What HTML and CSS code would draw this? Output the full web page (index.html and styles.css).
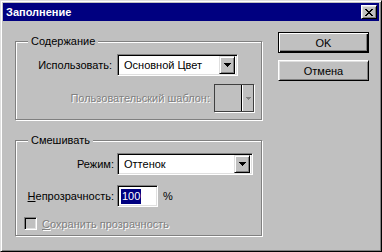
FILE: index.html
```html
<!doctype html>
<html>
	<head>
		<meta charset="utf-8" />
		<title>Заполнение</title>
		<link rel="stylesheet" href="styles.css">
	</head>
	<body>
		<div class="window">
			<div class="titlebar">
				<span class="title">Заполнение</span>
				<button class="close">
					<svg width="8" height="7" viewBox="0 0 8 7" shape-rendering="crispEdges">
						<path d="M0 0h2v1H0zM6 0h2v1H6zM1 1h2v1H1zM5 1h2v1H5zM2 2h4v1H2zM3 3h2v1H3zM2 4h4v1H2zM1 5h2v1H1zM5 5h2v1H5zM0 6h2v1H0zM6 6h2v1H6z" fill="#000"/>
					</svg>
				</button>
			</div>
			<div class="main">
				<div class="groups">
					<div class="group group-content">
						<span class="legend">Содержание</span>
						<div class="row use-row">
							<label class="lbl">Использовать:</label>
							<div class="combo combo-use">
								<span class="combo-text">Основной Цвет</span>
								<span class="drop">
									<svg width="7" height="4" viewBox="0 0 7 4" shape-rendering="crispEdges"><path d="M0 0h7v1H0zM1 1h5v1H1zM2 2h3v1H2zM3 3h1v1H3z" fill="#000"/></svg>
								</span>
							</div>
						</div>
						<div class="row pattern-row">
							<span class="disabled">Пользовательский шаблон:</span>
							<div class="pattern">
								<span class="swatch"></span>
								<span class="pattern-drop">
									<svg width="5" height="4" viewBox="0 0 5 4" shape-rendering="crispEdges"><path d="M0 1h5v1H0zM1 2h3v1H1zM2 3h1v1H2z" fill="#808080"/></svg>
								</span>
							</div>
						</div>
					</div>
					<div class="group group-blend">
						<span class="legend">Смешивать</span>
						<div class="blend-grid">
							<label class="lbl">Режим:</label>
							<div class="combo combo-mode">
								<span class="combo-text">Оттенок</span>
								<span class="drop">
									<svg width="7" height="4" viewBox="0 0 7 4" shape-rendering="crispEdges"><path d="M0 0h7v1H0zM1 1h5v1H1zM2 2h3v1H2zM3 3h1v1H3z" fill="#000"/></svg>
								</span>
							</div>
							<label class="lbl"><u>Н</u>епрозрачность:</label>
							<div class="opacity">
								<div class="field"><span class="sel">100</span></div>
								<span class="pct">%</span>
							</div>
						</div>
						<div class="check-row">
							<span class="check"></span>
							<span class="disabled"><u>С</u>охранить прозрачность</span>
						</div>
					</div>
				</div>
				<div class="buttons">
					<button class="btn btn-default">OK</button>
					<button class="btn">Отмена</button>
				</div>
			</div>
		</div>
	</body>
</html>
```

FILE: styles.css
```css
*{
	margin:0;
	padding:0;
	box-sizing:border-box;
}
body{
	background:#c0c0c0;
	font-family:"Liberation Sans", Arial, sans-serif;
	font-size:11px;
	color:#000;
}
.window{
	width:382px;
	height:252px;
	background:#c0c0c0;
	border:1px solid;
	border-color:#dfdfdf #000 #000 #dfdfdf;
	box-shadow:inset 1px 1px 0 #fff, inset -1px -1px 0 #808080;
	padding:2px;
}
.titlebar{
	height:18px;
	background:#000080;
	display:flex;
	align-items:center;
	justify-content:space-between;
	padding:0 2px 0 3px;
}
.title{
	color:#fff;
	font-weight:bold;
	font-size:11px;
	line-height:18px;
}
.close{
	width:16px;
	height:14px;
	background:#c0c0c0;
	border:1px solid;
	border-color:#fff #000 #000 #fff;
	box-shadow:inset 1px 1px 0 #dfdfdf, inset -1px -1px 0 #808080;
	display:flex;
	align-items:center;
	justify-content:center;
	padding:0 1px 0 0;
}
.close svg{
	display:block;
}
.main{
	display:flex;
	padding:11px 0 0 12px;
}
.groups{
	width:247px;
	margin-top:9px;
}
.group{
	position:relative;
	border:1px solid #808080;
	box-shadow:1px 1px 0 #fff, inset 1px 1px 0 #fff;
}
.group-content{
	height:79px;
	padding:12px 7px 0 0;
}
.group-blend{
	height:96px;
	margin-top:20px;
	padding-top:12px;
}
.legend{
	position:absolute;
	top:-7px;
	left:12px;
	padding:0 3px 0 3px;
	line-height:13px;
	background:#c0c0c0;
}
.row{
	display:flex;
	align-items:center;
}
.use-row .lbl{
	width:96px;
	text-align:right;
	margin-right:5px;
}
.pattern-row{
	justify-content:flex-end;
	margin-top:8px;
	gap:4px;
}
.disabled{
	color:#808080;
	text-shadow:1px 1px 0 #fff;
}
.combo{
	height:22px;
	background:#fff;
	border:1px solid;
	border-color:#808080 #fff #fff #808080;
	box-shadow:inset 1px 1px 0 #000, inset -1px -1px 0 #dfdfdf;
	padding:2px 2px 2px 0;
	display:flex;
	align-items:center;
}
.combo-use{
	width:121px;
}
.combo-mode{
	width:136px;
}
.combo-text{
	flex:1;
	padding-left:6px;
}
.drop{
	width:16px;
	height:18px;
	background:#c0c0c0;
	border:1px solid;
	border-color:#dfdfdf #000 #000 #dfdfdf;
	box-shadow:inset 1px 1px 0 #fff, inset -1px -1px 0 #808080;
	display:flex;
	align-items:center;
	justify-content:center;
}
.drop svg,
.pattern-drop svg{
	display:block;
}
.pattern{
	width:40px;
	height:28px;
	border:1px solid #404040;
	box-shadow:1px 1px 0 #fff;
	display:flex;
}
.swatch{
	width:27px;
	border-right:1px solid #000;
}
.pattern-drop{
	flex:1;
	display:flex;
	align-items:center;
	justify-content:center;
	border-left:1px solid #fff;
}
.blend-grid{
	display:grid;
	grid-template-columns:98px auto;
	column-gap:3px;
	row-gap:10px;
	align-items:center;
}
.blend-grid .lbl{
	text-align:right;
}
.opacity{
	display:flex;
	align-items:center;
	gap:5px;
}
.field{
	width:41px;
	height:22px;
	background:#fff;
	border:1px solid;
	border-color:#808080 #fff #fff #808080;
	box-shadow:inset 1px 1px 0 #000, inset -1px -1px 0 #dfdfdf;
	padding:0 0 0 3px;
	display:flex;
	align-items:center;
}
.sel{
	background:#000080;
	color:#fff;
	line-height:15px;
	padding:0 1px;
}
.check-row{
	display:flex;
	align-items:center;
	margin:10px 0 0 8px;
	gap:5px;
}
.check{
	width:13px;
	height:13px;
	background:#c0c0c0;
	border:1px solid;
	border-color:#808080 #fff #fff #808080;
	box-shadow:inset 1px 1px 0 #000, inset -1px -1px 0 #dfdfdf;
}
.buttons{
	display:flex;
	flex-direction:column;
	margin-left:16px;
	gap:7px;
}
.btn{
	width:91px;
	height:21px;
	background:#c0c0c0;
	font-family:"Liberation Sans", Arial, sans-serif;
	font-size:11px;
	color:#000;
	border:1px solid;
	border-color:#fff #000 #000 #fff;
	box-shadow:inset 1px 1px 0 #dfdfdf, inset -1px -1px 0 #808080;
}
.btn-default{
	border-color:#000;
	box-shadow:inset 1px 1px 0 #fff, inset -1px -1px 0 #000, inset -2px -2px 0 #808080;
}
```
